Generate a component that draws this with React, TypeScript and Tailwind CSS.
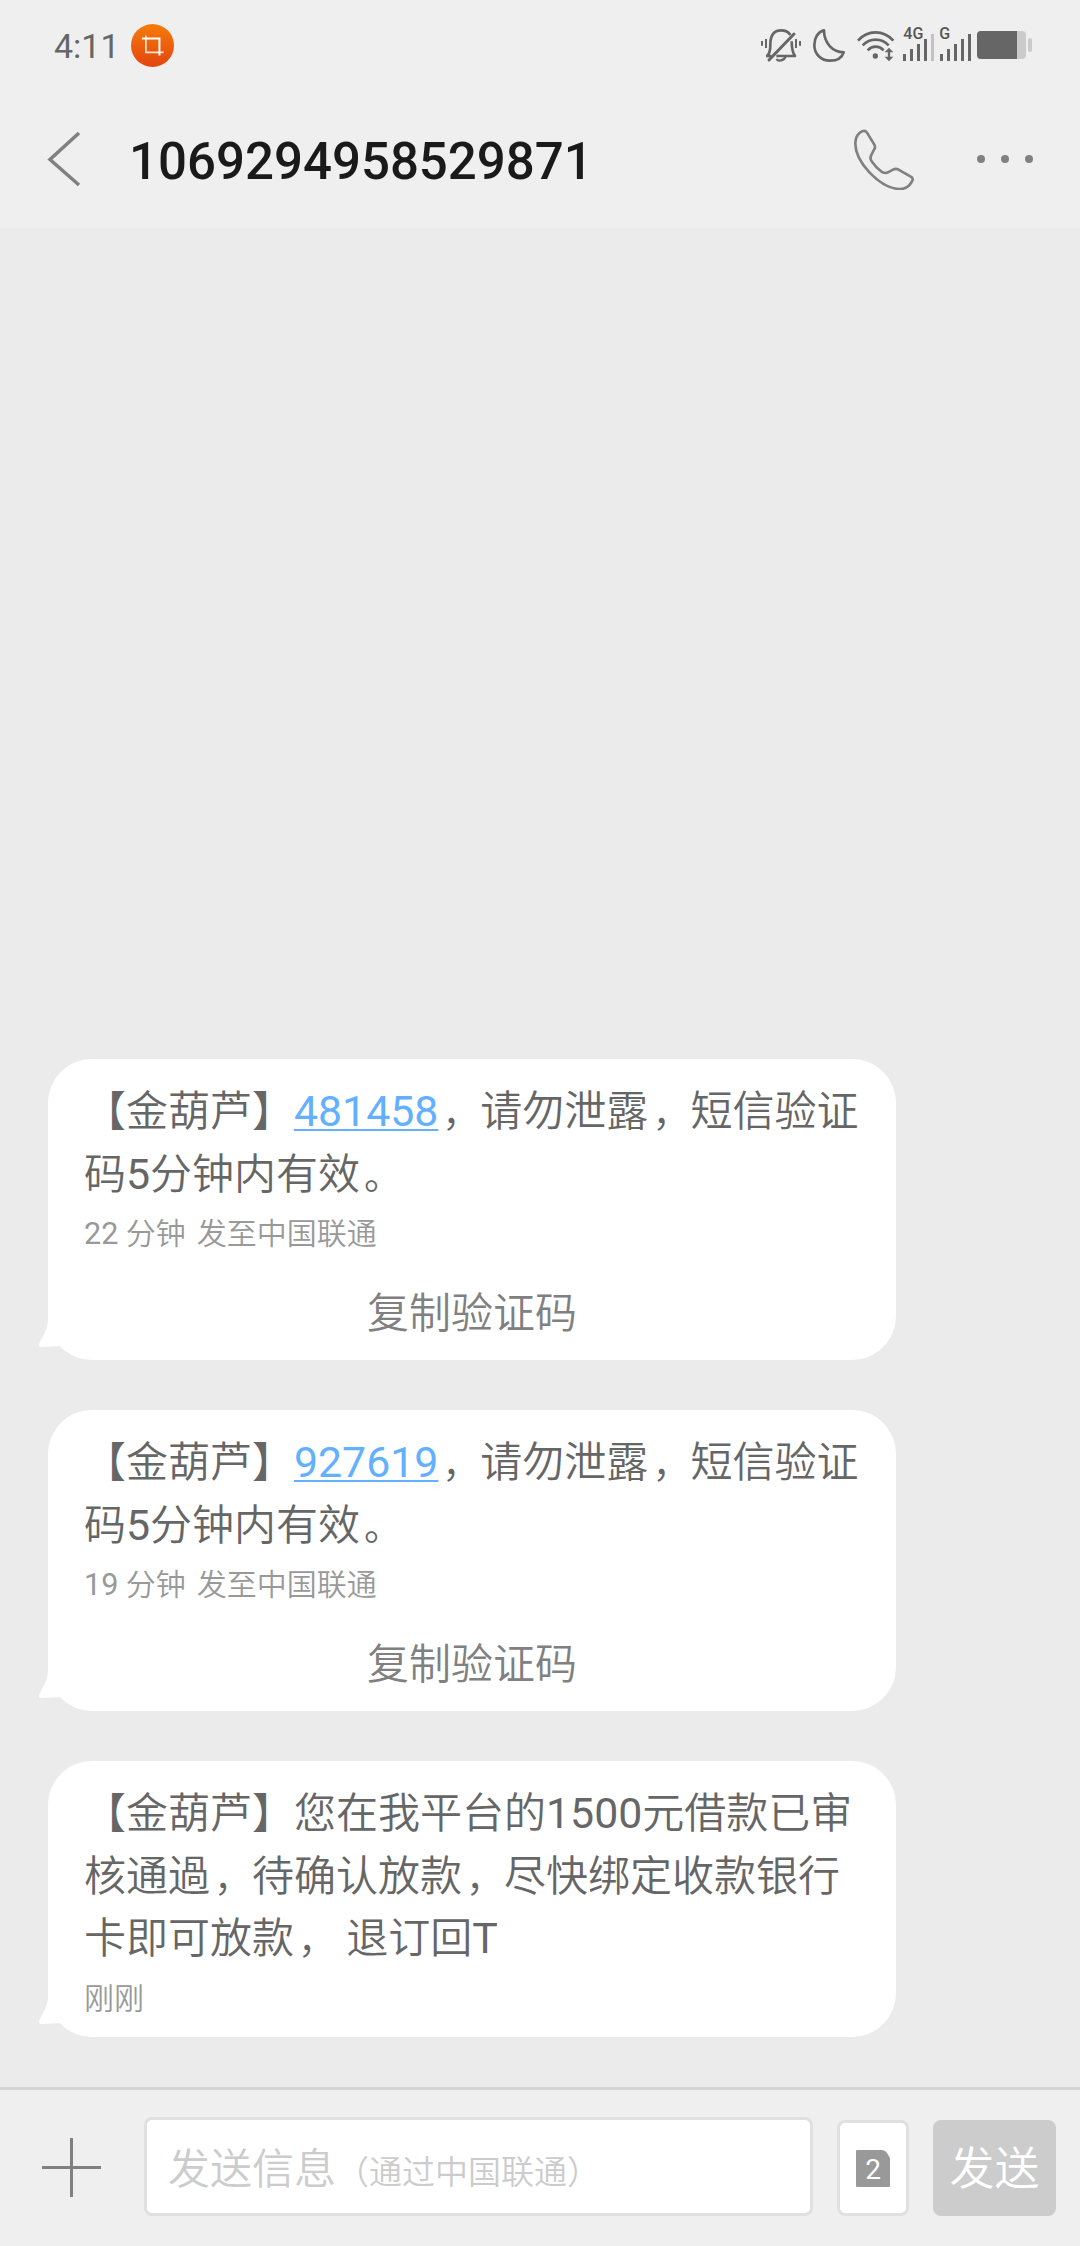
import { useState } from "react";

interface Message {
  code?: string;
  lines: string[];
  meta: string;
  via?: string;
}

const messages: Message[] = [
  {
    code: "481458",
    lines: ["，请勿泄露，短信验证", "码5分钟内有效。"],
    meta: "22 分钟",
    via: "发至中国联通",
  },
  {
    code: "927619",
    lines: ["，请勿泄露，短信验证", "码5分钟内有效。"],
    meta: "19 分钟",
    via: "发至中国联通",
  },
  {
    lines: ["您在我平台的1500元借款已审", "核通過，待确认放款，尽快绑定收款银行", "卡即可放款， 退订回T"],
    meta: "刚刚",
  },
];

// latin runs are drawn slightly bigger than the chinese glyphs around them,
// and full-width punctuation sits a little further into its box
function Mixed({ text }: { text: string }) {
  return (
    <>
      {text.split(/([0-9A-Z]+|[，。])/).map((part, i) => {
        if (/^[0-9A-Z]+$/.test(part)) {
          return (
            <span key={i} className="text-[1.02em] leading-none font-normal">
              {part}
            </span>
          );
        }
        if (/^[，。]$/.test(part)) {
          return (
            <span key={i} className="ml-[4px] text-[38px] leading-none">
              {part}
            </span>
          );
        }
        return part;
      })}
    </>
  );
}

function StatusIcons() {
  return (
    <svg className="ml-auto h-[40px] w-[280px]" viewBox="0 0 840 120" fill="none">
      {/* muted bell */}
      <g transform="translate(-60 -75)" stroke="#666" strokeWidth="8">
        <path d="M66 123v14M78 117v27M168 117v27M180 123v14" strokeWidth="6" />
        <path d="M82 168c8-9 9-18 9-34 0-28 10-43 32-43 13 0 23 5 28 14" strokeLinejoin="round" />
        <path d="M155 124c0 24 2 33 10 44h-56" strokeLinejoin="round" />
        <path d="M78 168h16" />
        <path d="M87 180l75-78" strokeWidth="9" strokeLinecap="round" />
        <path d="M110 177c3 7 22 7 27-8" strokeWidth="7" />
      </g>
      <g transform="translate(-60 -75)" stroke="#666" strokeWidth="8" strokeLinejoin="round">
        <path d="M252 91c-18 4-29 23-29 44 0 27 20 47 47 47 20 0 36-9 41-25-33-1-59-27-59-66z" />
      </g>
      {/* wifi */}
      <g transform="translate(-60 -75)" stroke="#666" strokeWidth="8">
        <path d="M354 122c29-33 76-33 106 0" />
        <path d="M368 136c22-23 56-23 78 0" />
        <path d="M383 151c14-15 34-15 48 0" />
        <circle cx="406" cy="168" r="8" fill="#666" stroke="none" />
        <path d="M447 150v28" strokeWidth="7" />
        <path d="M434 157l13-14 13 14zM434 170l13 14 13-14z" fill="#666" stroke="none" />
      </g>
      {/* signal bars */}
      <g transform="translate(-60 -75)" strokeWidth="9" stroke="#666">
        <path d="M493.500 162v21M514.500 147v36M535.500 132v51M556.500 117v66" />
        <path d="M577.500 102v81" stroke="#c2c2c2" />
        <path d="M604.500 162v21M625.500 147v36M646.500 132v51M667.500 117v66M688.500 102v81" />
      </g>
      <text x="430" y="42" className="fill-[#555] font-[Roboto] text-[48px] font-medium">4G</text>
      <text x="538" y="42" className="fill-[#555] font-[Roboto] text-[48px] font-medium">G</text>
      {/* battery */}
      <rect x="651" y="18" width="147" height="84" rx="12" fill="#cbcbcb" />
      <path d="M663 18h108v84H663q-12 0-12-12V30q0-12 12-12z" fill="#666" />
      <rect x="804" y="39" width="12" height="42" rx="6" fill="#cbcbcb" />
    </svg>
  );
}

function Bubble({ message }: { message: Message }) {
  return (
    <div className="relative w-[848px] rounded-[44px] bg-white px-9 pt-[22px]">
      {/* tail */}
      <svg className="absolute bottom-[9px] -left-[9px] h-[36px] w-[40px]" viewBox="0 0 40 36">
        <path d="M9 0C10 12 5 19 .5 28Q-1 32 2 32L23 31L40 20V0z" fill="#fff" />
      </svg>
      <div className="relative text-[42px] text-[#666]">
        {message.lines.map((line, i) => (
          <p key={line} className="h-[62.5px] leading-[62.5px] whitespace-pre">
            {i === 0 && "【金葫芦】"}
            {i === 0 && message.code && (
              <a className="text-[42.8px] leading-none font-normal text-[#62b0ff] underline decoration-2 underline-offset-[3px]">
                {message.code}
              </a>
            )}
            <Mixed text={line} />
          </p>
        ))}
      </div>
      <p className="relative mt-[6px] h-[44px] text-[30px] leading-[44px] text-[#999]">
        <Mixed text={message.meta} />
        {message.via && <span className="ml-[11px]">{message.via}</span>}
      </p>
      {message.code ? (
        <button className="mt-[26px] mb-[16px] block h-[62px] w-full text-center text-[42px] leading-[64px] text-[#808080]">
          复制验证码
        </button>
      ) : (
        <div className="h-[16.5px]" />
      )}
    </div>
  );
}

function App() {
  const [draft, setDraft] = useState("");

  return (
    <div className="flex h-[2246px] w-[1080px] flex-col overflow-hidden bg-[#ebebeb] font-[Roboto,'Noto_Sans_CJK_SC',sans-serif] font-[350]">
      <header className="h-[228px] bg-[#efefef]">
        <div className="flex h-[90px] items-center pr-[40px] pl-[54px] font-normal">
          <span className="w-[77px] pt-[2px] text-[34px] text-[#666]">4:11</span>
          <svg className="h-[43px] w-[43px]" viewBox="0 0 130 130" fill="none">
            <defs>
              <linearGradient id="badge" x1="0" y1="0" x2="0" y2="1">
                <stop offset="0" stopColor="#f57c0c" />
                <stop offset="1" stopColor="#e3440e" />
              </linearGradient>
            </defs>
            <circle cx="65" cy="65" r="65" fill="url(#badge)" />
            <path d="M45 35v51h54" stroke="#ffe3d0" strokeWidth="5" />
            <path d="M33 44h53v51" stroke="#fff" strokeWidth="6" />
          </svg>
          <StatusIcons />
        </div>
        <div className="flex h-[138px] items-center">
          <svg className="ml-[47px] h-[56px] w-[34px]" viewBox="0 0 34 56" fill="none">
            <path d="M32 2L3 28.500L32 54" stroke="#808080" strokeWidth="3.500" />
          </svg>
          <h1 className="ml-[48px] pt-[7px] text-[51px] font-medium text-[#1a1a1a]">1069294958529871</h1>
          <svg className="ml-auto h-[62px] w-[62px]" viewBox="342 85 186 186" fill="none" stroke="#808080" strokeWidth="8">
            <path
              d="M361 98q13-9 20 1l22 36q4 7 0 13l-9 18q-6 11 2 20 11 16 27 29 10 8 21 3l15-8q8-4 15-1l37 21q11 6 5 15-12 23-36 23c-34 0-65-22-91-49-26-28-43-60-43-87q0-22 15-34z"
              strokeLinejoin="round"
            />
          </svg>
          <div className="mr-[47px] ml-[61px] flex gap-4">
            <i className="h-2 w-2 rounded-full bg-[#808080]" />
            <i className="h-2 w-2 rounded-full bg-[#808080]" />
            <i className="h-2 w-2 rounded-full bg-[#808080]" />
          </div>
        </div>
      </header>

      <main className="flex flex-1 flex-col justify-end gap-[50px] pb-[50px] pl-12">
        {messages.map((message, i) => (
          <Bubble key={i} message={message} />
        ))}
      </main>

      <footer className="flex h-[159px] items-end border-t-[3px] border-[#d5d5d5] bg-[#efefef] pb-[30px]">
        <svg className="mb-[19px] ml-[42px] h-[59px] w-[59px]" viewBox="0 0 59 59" stroke="#808080" strokeWidth="3">
          <path d="M0 29.500H59M29.500 0V59" />
        </svg>
        <label className="relative ml-[43px] flex h-[99px] w-[669px] items-center rounded-lg border-[3px] border-[#e0e0e0] bg-white pl-[21px] text-[#ccc]">
          {!draft && (
            <span className="pt-[5px] text-[42px] whitespace-nowrap">
              发送信息<span className="text-[33px]">（通过中国联通）</span>
            </span>
          )}
          <input
            className="absolute inset-0 px-[22px] text-[42px] text-[#666] outline-none"
            value={draft}
            onChange={(e) => setDraft(e.target.value)}
          />
        </label>
        <button className="ml-6 flex h-[96px] w-[72px] items-center justify-center rounded-lg border-[3px] border-[#e0e0e0] bg-white">
          <svg className="h-[37px] w-[34px]" viewBox="0 0 34 37">
            <path d="M1 0H25Q29 0 31 3L34 8V36Q34 37 33 37H1Q0 37 0 36V1Q0 0 1 0z" fill="#999" />
            <text x="17" y="28.500" textAnchor="middle" className="fill-white font-[Roboto] text-[28px] font-normal">2</text>
          </svg>
        </button>
        <button className="ml-6 h-[96px] w-[123px] rounded-lg bg-[#ccc] pt-[4px] text-[45px] text-white">发送</button>
      </footer>
    </div>
  );
}

export default App;
